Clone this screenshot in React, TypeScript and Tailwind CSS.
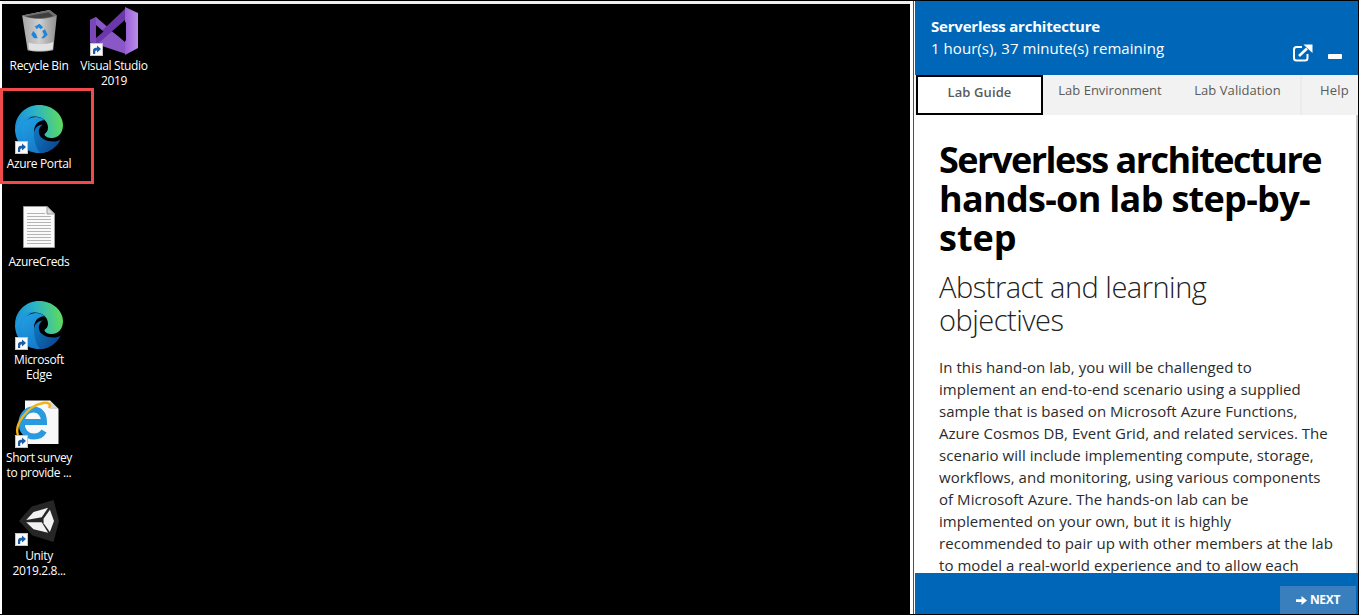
import type { ReactNode } from "react"

function Shortcut() {
  return (
    <svg viewBox="0 0 13 13" className="absolute left-0 bottom-0 w-[13px] h-[13px]">
      <rect x="0.5" y="0.5" width="12" height="12" fill="#fafafa" stroke="#c4c4c4" />
      <path d="M3 11 V7.4 C3 5.6 4.4 4.8 6 4.8 H7 V2.4 L11 6 L7 9.6 V7.4 H6.6 C5.6 7.4 5.2 8 5.2 9 V11 Z" fill="#1b5ca6" />
    </svg>
  )
}

function EdgeIcon() {
  return (
    <svg viewBox="0 0 48 48" className="w-12 h-12">
      <defs>
        <linearGradient id="edgeTop" x1="0" y1="0.6" x2="1" y2="0.5">
          <stop offset="0" stopColor="#1a8fd6" />
          <stop offset="0.45" stopColor="#2bb3c9" />
          <stop offset="1" stopColor="#5fdc5a" />
        </linearGradient>
        <linearGradient id="edgeLeft" x1="0" y1="0" x2="0.6" y2="1">
          <stop offset="0" stopColor="#22a3e4" />
          <stop offset="1" stopColor="#1479c8" />
        </linearGradient>
        <linearGradient id="edgeWave" x1="0" y1="0" x2="1" y2="0.7">
          <stop offset="0" stopColor="#0f7cc4" />
          <stop offset="1" stopColor="#0b4690" />
        </linearGradient>
      </defs>
      <path d="M0 24 C0 10 11 0 24 0 C38 0 48 10 48 20 C48 28 43 33 37 33 C33 33 29.5 31.5 29.5 29 C31.5 27.5 33 26 33 22.5 C33 16 27 11.5 20 11.5 C10 11.5 2 17 0 24 Z" fill="url(#edgeTop)" />
      <path d="M0 24 C2 15 11 10.5 19 10.5 C14 13 8 18 8 25 C8 37 17 46 28 47.6 C26.7 47.9 25.4 48 24 48 C11 48 0 38 0 24 Z" fill="url(#edgeLeft)" />
      <path d="M6 25 C8 16 15 12 21 12 C24.5 12 27.5 13.2 29.5 15.2 C22 15.5 19 21 19 27 C19 36 25 43 34 46 C31 47.3 27.5 48 24 48 C13 46 6 36 6 25 Z" fill="url(#edgeLeft)" />
      <path d="M19 29 C19 23.5 23 19.5 28 19.5 C24.5 21.5 23.5 25 24 28 C25 33.5 31 36.5 38 36.5 C41 36.5 43.5 36 45.5 34.5 C42 42.5 34 48 25 48 C21 43 19 36 19 29 Z" fill="url(#edgeWave)" />
    </svg>
  )
}

function RecycleBinIcon() {
  return (
    <svg viewBox="0 0 40 46" className="w-[37px] h-[42px]">
      <defs>
        <linearGradient id="binBody" x1="0" y1="0" x2="1" y2="0">
          <stop offset="0" stopColor="#a5a5a5" />
          <stop offset="0.5" stopColor="#cfcfcf" />
          <stop offset="1" stopColor="#8f8f8f" />
        </linearGradient>
      </defs>
      <path d="M1 6 L31 0 L39 6 L35 44 C28 46 12 46 7 44 Z" fill="url(#binBody)" />
      <path d="M1 6 L31 0 L39 6 C28 11 12 11 1 6 Z" fill="#6e6e6e" />
      <path d="M5 7 L30 2.5 L35 6.5 C26 9.5 13 9.5 5 7 Z" fill="#3f3f3f" />
      <path d="M15 18 L20 15 L24 19 L21 21 L19 19 L17 21 Z M26 21 L29 27 L25 31 L22 31 L25 27 L23 23 Z M13 23 L16 26 L18 31 L14 31 L11 27 Z" fill="#1b86dc" />
      <path d="M8 36 C16 38 28 38 35 35 L34.5 43 C28 45 13 45 8.5 43 Z" fill="#e2e2e2" />
    </svg>
  )
}

function VisualStudioIcon() {
  return (
    <svg viewBox="0 0 48 48" className="w-12 h-12">
      <defs>
        <linearGradient id="vsRight" x1="0" y1="0" x2="1" y2="0">
          <stop offset="0" stopColor="#9a5fd6" />
          <stop offset="1" stopColor="#bb8eea" />
        </linearGradient>
      </defs>
      <path d="M0 35 L0 13 L6 10 L36 36 V47 Z" fill="#8a58c6" />
      <path d="M0 35 L6 38.5 L36 12 V1 Z" fill="#6b38ac" />
      <path d="M0 13 V35 L6 38.5 V10 Z" fill="#7a47b8" />
      <path d="M6 18 L13.5 24.5 L6 31 Z" fill="#000" />
      <path d="M35 0 L48 6 V41 L35 48 Z" fill="url(#vsRight)" />
      <path d="M36 15 L22 24.5 L36 34 Z" fill="#000" />
    </svg>
  )
}

function DocIcon() {
  return (
    <svg viewBox="0 0 32 42" className="w-8 h-[42px]">
      <path d="M0.5 0.5 H24 L31.5 8 V41.5 H0.5 Z" fill="#fafafa" stroke="#9b9b9b" />
      <path d="M24 0.5 V8 H31.5 Z" fill="#dcdcdc" stroke="#9b9b9b" />
      {[7, 10, 13, 16, 19, 22, 25, 28, 31, 34, 37].map((y) => (
        <rect key={y} x="4" y={y} width={y < 10 ? 18 : 24} height="1" fill="#b4b4b4" />
      ))}
    </svg>
  )
}

function IeIcon() {
  return (
    <svg viewBox="0 0 48 46" className="w-12 h-[46px]">
      <path d="M10 0.5 H35 L43.5 9 V44 H10 Z" fill="#f8f8f8" />
      <path d="M35 0.5 V9 H43.5 Z" fill="#d6d6d6" />
      <path d="M8 22 H29 C29 13 24 9.5 18 9.5 C11 9.5 6.5 16 6.5 23 C6.5 31 11.5 36.5 19 36.5 C23.5 36.5 27 34.5 29 31" fill="none" stroke="#2a9ae0" strokeWidth="6" />
      <path d="M3 35 C-1 25 12 6 28 3 C34 2 36 4 34 8" fill="none" stroke="#f0b41a" strokeWidth="2.4" />
    </svg>
  )
}

function UnityIcon() {
  return (
    <svg viewBox="0 0 44 46" className="h-[44px] w-[40px]">
      <path d="M0 23 L14 7 L38 0 L44 23 L38 46 L15 39 Z" fill="#262626" />
      <path d="M8 22 L16 13 L32 8.5 L25 19 Z" fill="#f2f2f2" />
      <path d="M27 20.5 L34 10.5 L38.5 23 L34 35 L27 25.5 Z" fill="#f2f2f2" />
      <path d="M8 24.5 L25 24.5 L32 36 L16 32 Z" fill="#f2f2f2" />
    </svg>
  )
}

function DesktopIcon({ icon, label, shortcut = true }: { icon: ReactNode; label: ReactNode; shortcut?: boolean }) {
  return (
    <div className="flex w-[74px] flex-col items-center">
      <div className="relative flex h-[50px] w-[48px] items-center justify-center">
        {icon}
        {shortcut && <Shortcut />}
      </div>
      <div className="mt-[2px] whitespace-nowrap text-center text-[12px] leading-[15px] tracking-[-0.35px] text-white [text-shadow:0_1px_1px_#000]">{label}</div>
    </div>
  )
}

function Desktop() {
  return (
    <div className="relative ml-[2px] w-[908px] border-t-[3px] border-[#efefef] bg-black pt-[2px]">
      <div className="flex h-[98px] gap-[1px]">
        <DesktopIcon icon={<RecycleBinIcon />} label="Recycle Bin" shortcut={false} />
        <DesktopIcon icon={<VisualStudioIcon />} label={<>Visual Studio<br />2019</>} />
      </div>
      <div className="h-[98px]">
        <DesktopIcon icon={<EdgeIcon />} label="Azure Portal" />
      </div>
      <div className="h-[98px]">
        <DesktopIcon icon={<DocIcon />} label="AzureCreds" shortcut={false} />
      </div>
      <div className="h-[98px]">
        <DesktopIcon icon={<EdgeIcon />} label={<>Microsoft<br />Edge</>} />
      </div>
      <div className="h-[98px]">
        <DesktopIcon icon={<IeIcon />} label={<>Short survey<br />to provide ...</>} />
      </div>
      <div className="h-[98px]">
        <DesktopIcon icon={<UnityIcon />} label={<>Unity<br />2019.2.8...</>} />
      </div>
      {/* highlight round the Azure Portal shortcut */}
      <div className="absolute left-[-2px] top-[84px] h-[96px] w-[94px] border-[3px] border-[#f04a4a]" />
    </div>
  )
}

function LabPanel() {
  return (
    <div className="ml-[3px] flex w-[445px] flex-col border-l border-[#0067b8]">
      <div className="flex h-full flex-col border-l border-white">
        <div className="flex h-[74px] items-start justify-between bg-[#0067b8] pl-[16px] pr-[16px] pt-[16px] text-white">
          <div>
            <div className="text-[15px] font-bold leading-[18px] tracking-[-0.2px]">Serverless architecture</div>
            <div className="mt-[3px] text-[15px] leading-[20px] tracking-[0.05px]">1 hour(s), 37 minute(s) remaining</div>
          </div>
          <div className="mt-[27px] flex items-center gap-[15px]">
            <svg viewBox="0 0 20 18" className="h-[18px] w-5" fill="none">
              <path d="M9 3 H3.5 C2 3 1 4 1 5.5 V14 C1 15.5 2 16.5 3.5 16.5 H12 C13.5 16.5 14.5 15.5 14.5 14 V10" stroke="#fff" strokeWidth="2" />
              <path d="M6 12 L14 4.5" stroke="#fff" strokeWidth="2.6" />
              <path d="M10.5 0.5 H19.5 V9 Z" fill="#fff" />
            </svg>
            <div className="mt-[6px] h-[5px] w-[14px] rounded-[1px] bg-white" />
          </div>
        </div>
        <div className="flex h-[40px] bg-[#f2f2f2] pl-[1px] text-[13px] text-[#5a5a5a]">
          <div className="flex w-[127px] items-center justify-center border-2 border-black bg-white pb-[4px] font-semibold tracking-[0.1px]">Lab Guide</div>
          <div className="w-[134px] pt-[6px] text-center">Lab Environment</div>
          <div className="w-[125px] border-r-2 border-[#ececec] pr-[2px] pt-[6px] text-center tracking-[0.05px]">Lab Validation</div>
          <div className="flex-1 pl-[18px] pt-[6px] tracking-[0.2px]">Help</div>
        </div>
        <div className="h-[458px] overflow-hidden border-r-2 border-[#c8c8c8] bg-white pl-[24px] pt-[25px]">
          <h1 className="whitespace-nowrap text-[36px] font-bold leading-[39px] text-black">
            <span className="tracking-[-1.5px]">Serverless architecture</span><br />
            <span className="tracking-[-0.7px]">hands-on lab step-by-</span><br />
            step
          </h1>
          <h2 className="mt-[13px] whitespace-nowrap text-[29px] font-light leading-[33px] tracking-[-0.5px] text-[#222]">
            Abstract and learning<br />objectives
          </h2>
          <p className="mt-[20px] whitespace-nowrap text-[15px] leading-[22px] tracking-[0.05px] text-[#2b2b2b]">
            In this hand-on lab, you will be challenged to<br />
            implement an end-to-end scenario using a supplied<br />
            sample that is based on Microsoft Azure Functions,<br />
            Azure Cosmos DB, Event Grid, and related services. The<br />
            scenario will include implementing compute, storage,<br />
            workflows, and monitoring, using various components<br />
            of Microsoft Azure. The hands-on lab can be<br />
            implemented on your own, but it is highly<br />
            recommended to pair up with other members at the lab<br />
            to model a real-world experience and to allow each
          </p>
        </div>
        <div className="flex h-[41px] items-end justify-end bg-[#0067b8] pr-[2px]">
          <div className="flex h-[28px] w-[76px] items-center justify-center gap-[3px] bg-[#3a7fbd] text-[12px] font-bold tracking-[-0.3px] text-white">
            <svg viewBox="0 0 12 12" className="h-[11px] w-[11px]" fill="#fff">
              <path d="M0 4.5 H6 V1 L12 6 L6 11 V7.5 H0 Z" />
            </svg>
            NEXT
          </div>
        </div>
      </div>
    </div>
  )
}

export default function App() {
  return (
    <div className="flex h-[615px] w-[1359px] overflow-hidden border-y border-r border-black bg-white font-['Open_Sans',sans-serif]">
      <Desktop />
      <LabPanel />
    </div>
  )
}
